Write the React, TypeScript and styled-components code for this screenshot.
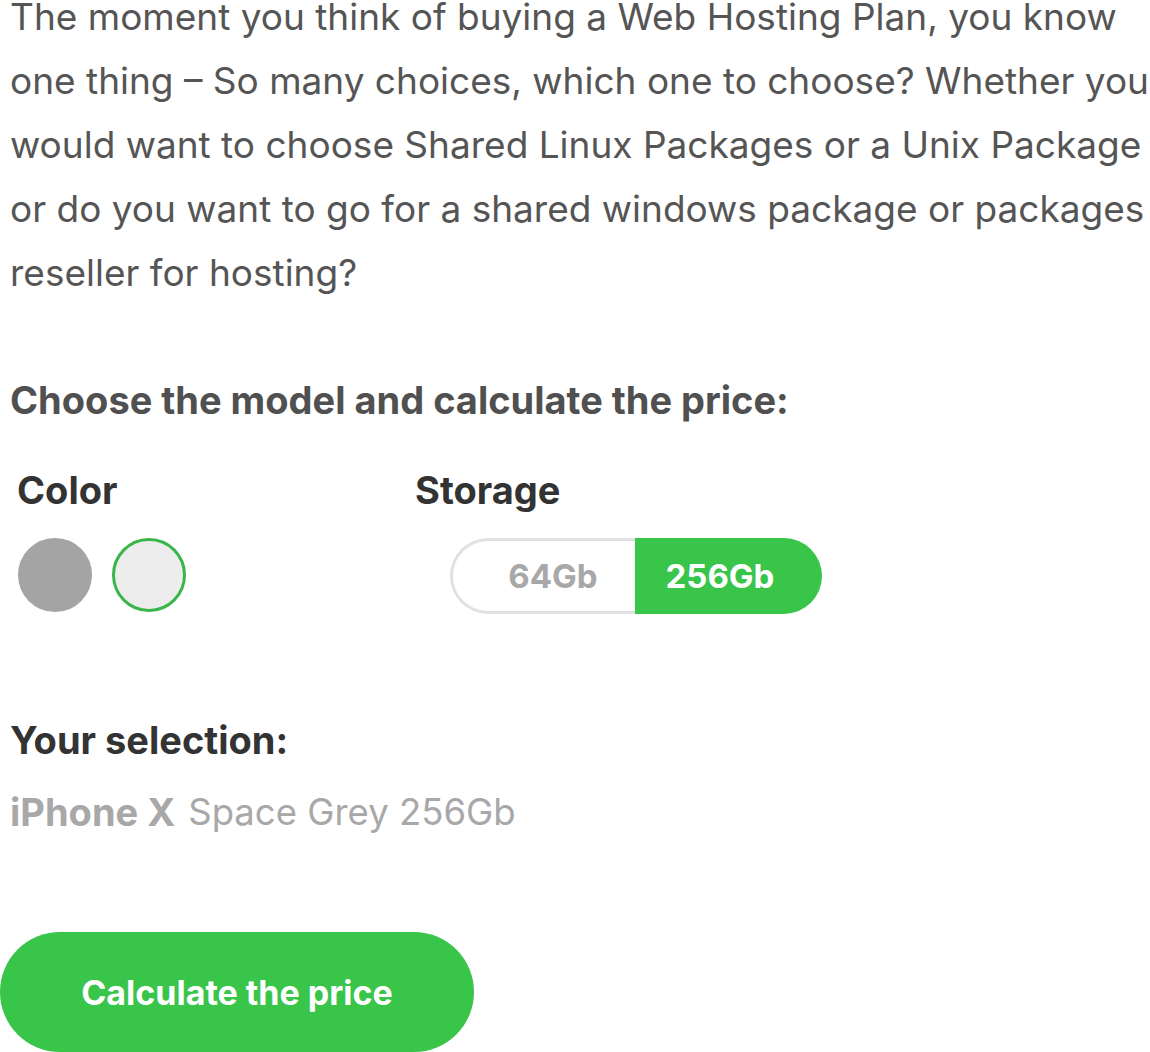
import styled, { createGlobalStyle } from 'styled-components';
import { useState } from 'react';

const GlobalStyle = createGlobalStyle`
  html, body {
    margin: 0;
    padding: 0;
    background: #ffffff;
    overflow: hidden;
  }
  body {
    font-family: Inter, Roboto, "Liberation Sans", sans-serif;
  }
`;

const swatches = [
  { name: 'Space Grey', color: '#a4a4a4' },
  { name: 'Silver', color: '#ededed' },
];

const storages = ['64Gb', '256Gb'];

export default function App() {
  const [color, setColor] = useState(1);
  const [storage, setStorage] = useState(1);

  return (
    <Page>
      <GlobalStyle />
      <Intro>
        The moment you think of buying a Web Hosting Plan, you know one thing –
        So many choices, which one to choose? Whether you would want to choose
        Shared Linux Packages or a Unix Package or do you want to go for a
        shared windows package or packages reseller for hosting?
      </Intro>

      <Heading>Choose the model and calculate the price:</Heading>

      <Options>
        <OptionGroup>
          <Label>Color</Label>
          <Swatches>
            {swatches.map((s, i) => (
              <Swatch
                key={s.name}
                $color={s.color}
                $active={color === i}
                onClick={() => setColor(i)}
                aria-label={s.name}
              />
            ))}
          </Swatches>
        </OptionGroup>
        <OptionGroup>
          <Label>Storage</Label>
          <Toggle>
            {storages.map((s, i) => (
              <ToggleItem
                key={s}
                $active={storage === i}
                onClick={() => setStorage(i)}
              >
                {s}
              </ToggleItem>
            ))}
          </Toggle>
        </OptionGroup>
      </Options>

      <SelectionTitle>Your selection:</SelectionTitle>
      <Selection>
        <Model>iPhone X</Model>
        <span>Space Grey {storages[storage]}</span>
      </Selection>

      <CalcButton>Calculate the price</CalcButton>
    </Page>
  );
}

const Page = styled.div`
  width: 1150px;
  margin-top: -15px;
`;

const Intro = styled.p`
  margin: 0;
  padding-left: 10px;
  width: 1140px;
  font-size: 37px;
  line-height: 64px;
  color: #555555;
`;

const Heading = styled.h2`
  margin: 71px 0 0;
  padding-left: 10px;
  font-size: 38px;
  line-height: 48px;
  font-weight: 700;
  color: #505050;
`;

const Options = styled.div`
  display: flex;
  margin-top: 42px;
  padding-left: 17px;
`;

const OptionGroup = styled.div`
  display: flex;
  flex-direction: column;
  gap: 24px;
  &:first-child {
    width: 398px;
  }
`;

const Label = styled.div`
  font-size: 38px;
  line-height: 48px;
  font-weight: 700;
  color: #333333;
`;

const Swatches = styled.div`
  display: flex;
  gap: 20px;
  padding-left: 1px;
`;

const Swatch = styled.button<{ $color: string; $active: boolean }>`
  width: 74px;
  height: 74px;
  border-radius: 50%;
  padding: 0;
  background: ${(p) => p.$color};
  border: 3px solid ${(p) => (p.$active ? '#3ab54a' : p.$color)};
  cursor: pointer;
`;

const Toggle = styled.div`
  display: flex;
  margin-left: 35px;
  width: 372px;
  height: 76px;
`;

const ToggleItem = styled.button<{ $active: boolean }>`
  flex: 0 0 185px;
  padding: 0;
  font-family: inherit;
  font-size: 33px;
  font-weight: 700;
  cursor: pointer;
  color: ${(p) => (p.$active ? '#ffffff' : '#a8a8a8')};
  background: ${(p) => (p.$active ? '#39c44a' : '#ffffff')};
  border: 3px solid ${(p) => (p.$active ? '#39c44a' : '#e1e1e1')};
  &:first-child {
    border-right: none;
    border-radius: 38px 0 0 38px;
    padding-left: 18px;
  }
  &:last-child {
    flex-basis: 187px;
    border-left: none;
    border-radius: 0 38px 38px 0;
    padding-right: 14px;
  }
`;

const SelectionTitle = styled.div`
  margin-top: 102px;
  padding-left: 10px;
  font-size: 38px;
  line-height: 48px;
  font-weight: 700;
  color: #333333;
`;

const Selection = styled.div`
  display: flex;
  gap: 13px;
  margin-top: 24px;
  padding-left: 10px;
  font-size: 36.5px;
  line-height: 48px;
  color: #a8a8a8;
`;

const Model = styled.span`
  font-size: 38px;
  font-weight: 700;
`;

const CalcButton = styled.button`
  display: block;
  margin-top: 96px;
  width: 474px;
  height: 120px;
  border: none;
  border-radius: 60px;
  background: #39c44a;
  color: #ffffff;
  font-family: inherit;
  font-size: 34px;
  font-weight: 700;
  cursor: pointer;
`;
